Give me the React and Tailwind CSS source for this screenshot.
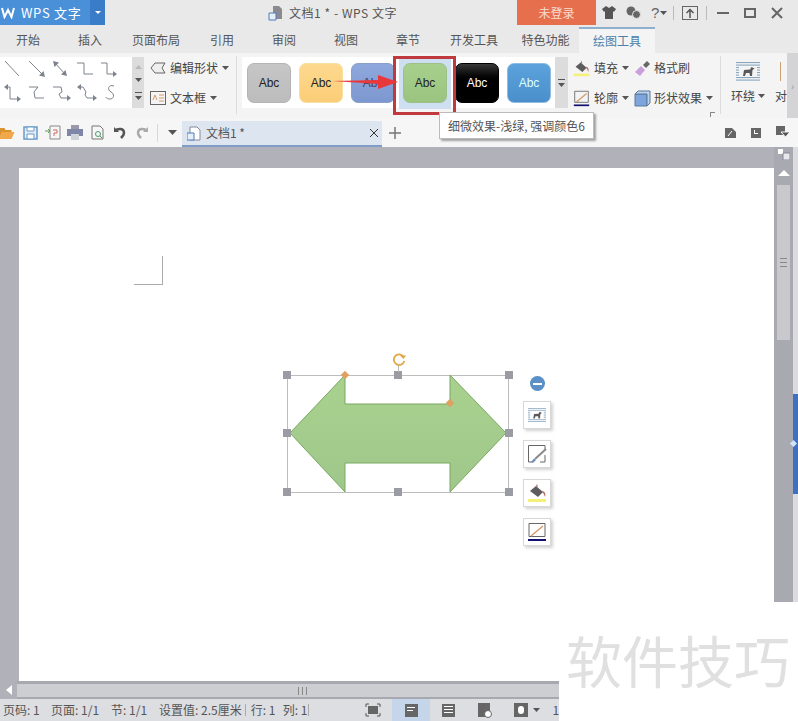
import React from "react";

const FONT = '"Noto Sans CJK SC", "Liberation Sans", sans-serif';

const Caret = ({ className = "" }) => (
  <svg width="7" height="4" viewBox="0 0 7 4" className={className}><path d="M0 0h7L3.500 4z" fill="#555" /></svg>
);

const tabs = [
  ["开始", "w-[56px]"], ["插入", "w-[68px]"], ["页面布局", "w-[64px]"], ["引用", "w-[68px]"], ["审阅", "w-[56px]"],
  ["视图", "w-[68px]"], ["章节", "w-[56px]"], ["开发工具", "w-[76px]"], ["特色功能", "w-[67px]"],
];

const Ln = ({ d, a }) => (
  <svg width="24" height="24" viewBox="0 0 24 24" fill="none" stroke="#7d838c" strokeWidth="1" className="overflow-visible">
    <path d={d} />
    {a && <path d={a} fill="#7d838c" stroke="none" />}
  </svg>
);

const lines = [
  ["M2 2L16 17"],
  ["M1 2L15 16", "M17 18l-6-1.500 4.500-4.500z"],
  ["M3 4L13 15", "M1 2l6 1.500-4.500 4.500zM15 17l-6-1.500 4.500-4.500z"],
  ["M0 4h7v11h9"],
  ["M0 4h6v11h7", "M16 15l-4-3v6z"],
  ["M3 4h4v12h8", "M1 4l4-3v6zM18 16l-4-3v6z"],
  ["M1 4h9l-4 5 1 6h9"],
  ["M1 4h8l1 5-3 2 2 4h7", "M19 15l-4-3v6z"],
  ["M3 4h3l3 5-1 3 2 3h7", "M0 4l4-3v6zM20 15l-4-3v6z"],
  ["M13 3C7 1 6 7 10 9s3 7-1 7-4-2-4-2"],
];

const Swatch = ({ bg, border, color = "text-[#222]" }) => (
  <div className={`w-[44px] h-[40px] rounded-[7px] border-[1.5px] flex items-center justify-center text-[12px] ${bg} ${border} ${color}`} style={{ fontFamily: '"Liberation Sans", sans-serif' }}>Abc</div>
);

const WrapIcon = ({ size = 24 }) => (
  <svg width={size} height={size * 0.8} viewBox="0 0 24 19">
    <path d="M0 .5h24M0 3h24M0 15.500h24M0 18h24M0 5.500h3M21 5.500h3M0 8h3M21 8h3M0 10.500h3M21 10.500h3M0 13h3M21 13h3" stroke="#7f9fba" strokeWidth="1" />
    <path d="M7 14l1-6 6-.5 1.500-2.500 3 1.500-2 1.500-.5 6h-2l-.5-3H10l-1 3z" fill="#5a5a5c" />
  </svg>
);

const PenBox = () => (
  <svg width="20" height="20" viewBox="0 0 20 20" fill="none">
    <path d="M18 6V1.500H1.500V18H6M18 11v7h-5" stroke="#666" strokeWidth="1" />
    <path d="M19 5L8 15" stroke="#8a8a8a" strokeWidth="2" />
    <path d="M4 18l3-3.500 2 1.500-2.500 2.500z" fill="#6b8cc0" />
  </svg>
);

const Bucket = ({ w = 20 }) => (
  <svg width={w} height={w} viewBox="0 0 20 20">
    <path d="M3 8l6-5 7 6-5 5z" fill="#5d5d5f" />
    <path d="M9 3l1-2 1 3zM16 8c2 1 3 3 2 6-1-2-1-4-3-5z" fill="#b46a5a" />
    <path d="M1 16h18v3H1z" fill="#f4f07a" />
  </svg>
);

const Outline = ({ w = 20 }) => (
  <svg width={w} height={w} viewBox="0 0 20 20" fill="none">
    <path d="M2 1.500h16v13H2z" stroke="#666" />
    <path d="M4 14L16 4" stroke="#d39a6a" strokeWidth="1.500" />
    <path d="M1 17h18v2H1z" fill="#101070" />
  </svg>
);

const FloatBtn = ({ children }) => (
  <div className="w-[28px] h-[28px] bg-white border border-[#d8d8d8] shadow-[2px_2px_3px_rgba(0,0,0,0.18)] flex items-center justify-center">{children}</div>
);

const Handle = ({ className }) => <div className={`absolute w-[8px] h-[8px] bg-[#9b9ba3] ${className}`} />;

export default function App() {
  return (
    <div className="relative w-[798px] h-[721px] overflow-hidden flex flex-col bg-[#f4f4f4] text-[12px] text-[#444]" style={{ fontFamily: FONT }}>
      {/* Title bar */}
      <div className="h-[25px] flex bg-[#e9e9e9] shrink-0">
        <div className="w-[90px] bg-[#4a90d9] flex items-center gap-[6px] pl-[1px] text-white text-[13px]">
          <svg width="14" height="12" viewBox="0 0 14 12" fill="none" stroke="#fff" strokeWidth="2"><path d="M1 1l2.500 9L7 3l3.500 7L13 1" /></svg>
          <span className="whitespace-nowrap tracking-[0.7px]">WPS 文字</span>
        </div>
        <div className="w-[15px] bg-[#3a7cc8] flex items-center justify-center"><svg width="6" height="3" viewBox="0 0 6 3"><path d="M0 0h6L3 3z" fill="#fff" /></svg></div>
        <div className="w-[163px] shrink-0" />
        <div className="flex items-center gap-[5px] w-[249px] shrink-0">
          <svg width="16" height="16" viewBox="0 0 16 16"><path d="M5 1h6l3 3v10H5z" fill="#8a8a90" /><path d="M1 8h7v7H1z" fill="#e8eef6" stroke="#4a7cc0" /></svg>
          <span className="whitespace-nowrap text-[#555] tracking-[0.55px]">文档1 * - WPS 文字</span>
        </div>
        <div className="w-[79px] bg-[#e6704e] text-[#f8ddd0] flex items-center justify-center">未登录</div>
        <div className="flex-1 flex items-center pl-[6px] text-[#666]">
          <svg width="14" height="13" viewBox="0 0 14 13"><path d="M4 0L0 3l2 3 1-1v8h8V5l1 1 2-3-4-3-3 2z" fill="#555" /></svg>
          <svg width="15" height="13" viewBox="0 0 15 13" className="ml-[10px]"><circle cx="5" cy="5" r="4.500" fill="#666" /><circle cx="10.500" cy="8.500" r="4" fill="#666" stroke="#e9e9e9" /></svg>
          <span className="ml-[10px] text-[15px] leading-none" style={{ fontFamily: '"Liberation Sans", sans-serif' }}>?</span>
          <Caret className="ml-[1px]" />
          <div className="w-px h-[14px] bg-[#bbb] ml-[6px]" />
          <div className="ml-[8px] w-[16px] h-[14px] border border-[#666] flex items-center justify-center">
            <svg width="10" height="10" viewBox="0 0 10 10" fill="none" stroke="#555" strokeWidth="1.500"><path d="M5 10V2M1.500 5L5 1.500 8.500 5" /></svg>
          </div>
          <div className="w-px h-[14px] bg-[#bbb] ml-[8px]" />
          <div className="ml-[10px] w-[12px] h-[2px] bg-[#666]" />
          <div className="ml-[15px] w-[12px] h-[10px] border-2 border-[#666]" />
          <svg width="12" height="12" viewBox="0 0 12 12" className="ml-[15px]" stroke="#666" strokeWidth="2"><path d="M1 1l10 10M11 1L1 11" /></svg>
        </div>
      </div>

      {/* Tabs */}
      <div className="h-[28px] flex bg-[#e9e9e9] shrink-0">
        {tabs.map(([t, w]) => (
          <div key={t} className={`${w} flex items-center justify-center text-[#555] pt-[2px]`}>{t}</div>
        ))}
        <div className="w-[76px] mt-[2px] bg-[#f4f4f4] border-t-2 border-[#8fb0cc] flex items-center justify-center text-[#4d80a8]">绘图工具</div>
      </div>

      {/* Ribbon */}
      <div className="h-[65px] flex bg-[#f4f4f4] shrink-0 relative">
        <div className="w-[132px] h-[51px] mt-[4px] bg-white grid grid-cols-[repeat(5,24.5px)] auto-rows-[24px] pl-[3px] pt-[2px] shrink-0">
          {lines.map(([d, a], i) => <Ln key={i} d={d} a={a} />)}
        </div>
        <div className="w-[12px] h-[51px] mt-[4px] bg-[#dcdcdc] flex flex-col items-center justify-around shrink-0 py-[3px]">
          <svg width="7" height="4" viewBox="0 0 7 4"><path d="M0 4h7L3.500 0z" fill="#bbb" /></svg>
          <Caret />
          <svg width="7" height="8" viewBox="0 0 7 8"><path d="M0 0h7v1H0zM0 4h7L3.500 8z" fill="#555" /></svg>
        </div>
        <div className="w-[92px] shrink-0 pl-[6px] pt-[4px] flex flex-col gap-[8px]">
          <div className="h-[22px] flex items-center gap-[4px] whitespace-nowrap">
            <svg width="16" height="12" viewBox="0 0 16 12" fill="#eee" stroke="#666"><path d="M1 6l4-5h10l-3 5 3 5H5z" /></svg>
            编辑形状<Caret />
          </div>
          <div className="h-[22px] flex items-center gap-[4px] whitespace-nowrap">
            <svg width="16" height="14" viewBox="0 0 16 14" fill="none"><rect x=".5" y=".5" width="15" height="13" stroke="#666" /><path d="M3 9l2-5 2 5M9 4h5M9 7h5M9 10h5" stroke="#d39a6a" /></svg>
            文本框<Caret />
          </div>
        </div>
        <div className="w-px h-[58px] mt-[3px] bg-[#dcdcdc] shrink-0" />
        <div className="w-[5px] shrink-0" />
        <div className="w-[313px] h-[51px] mt-[4px] bg-white flex items-center gap-[8px] pl-[5px] shrink-0 relative">
          <Swatch bg="bg-gradient-to-b from-[#c6c6c6] to-[#bcbcbc]" border="border-[#b4b4b4]" />
          <Swatch bg="bg-gradient-to-b from-[#fdd98e] to-[#fbcd77]" border="border-[#f6e0a0]" />
          <Swatch bg="bg-gradient-to-b from-[#8fa8dc] to-[#7d97d0]" border="border-[#8aa0c8]" color="text-[#445]" />
          <div className="relative w-[44px] h-[40px]">
            <div className="absolute -inset-x-[4px] -inset-y-[6px] bg-[#cddff0]" />
            <div className="relative"><Swatch bg="bg-gradient-to-b from-[#a8d08d] to-[#9ac480]" border="border-[#9dc088]" /></div>
          </div>
          <Swatch bg="bg-gradient-to-b from-[#3a3a3a] via-black to-black" border="border-black" color="text-white" />
          <Swatch bg="bg-gradient-to-b from-[#5ba3dd] to-[#4a8fcb]" border="border-[#8fbce0]" color="text-[#dff]" />
        </div>
        <div className="w-[13px] h-[51px] mt-[4px] bg-[#dcdcdc] flex items-center justify-center shrink-0">
          <svg width="7" height="8" viewBox="0 0 7 8"><path d="M0 0h7v1H0zM0 4h7L3.500 8z" fill="#555" /></svg>
        </div>
        <div className="w-[152px] shrink-0 pl-[5px] pt-[4px] flex flex-col gap-[8px] relative">
          <div className="h-[22px] flex items-center whitespace-nowrap">
            <Bucket w={17} /><span className="ml-[4px]">填充</span><Caret className="ml-[4px]" />
            <svg width="17" height="17" viewBox="0 0 17 17" className="ml-[5px]"><path d="M1 12l6-6 4 4-5 6z" fill="#c9a0dc" /><path d="M9 5l4-4 3 3-4 4z" fill="#666" /></svg>
            <span className="ml-[3px]">格式刷</span>
          </div>
          <div className="h-[22px] flex items-center whitespace-nowrap">
            <Outline w={17} /><span className="ml-[4px]">轮廓</span><Caret className="ml-[4px]" />
            <svg width="17" height="17" viewBox="0 0 17 17" className="ml-[5px]"><path d="M1 4h12v12H1z" fill="#7fa6dc" stroke="#5a7a9a" /><path d="M1 4l3-3h12v12l-3 3V4z" fill="#bcd2ea" stroke="#5a7a9a" /></svg>
            <span className="ml-[3px]">形状效果</span><Caret className="ml-[4px]" />
          </div>
          <div className="absolute right-[5px] bottom-[1px] w-[5px] h-[5px] border-l border-t border-[#888]" />
        </div>
        <div className="w-px h-[58px] mt-[3px] bg-[#dcdcdc] shrink-0" />
        <div className="w-[54px] shrink-0 flex flex-col items-start pl-[10px] pt-[9px]">
          <div className="ml-[5px]"><WrapIcon /></div>
          <div className="mt-[6px] flex items-center gap-[3px] whitespace-nowrap">环绕<Caret /></div>
        </div>
        <div className="w-[12px] shrink-0 pt-[9px] flex flex-col">
          <div className="w-px h-[19px] bg-[#c9a070] ml-[5px]" />
          <div className="mt-[6px] whitespace-nowrap">对</div>
        </div>
        <div className="w-[11px] h-[65px] bg-[#d4d4d6] flex items-center justify-center text-[#999] text-[10px]">›</div>
      </div>

      {/* Quick access bar */}
      <div className="h-[29px] flex items-end bg-[#f6f6f6] shrink-0 relative">
        <div className="h-[29px] w-[184px] flex items-center shrink-0 -ml-[2px]">
          <svg width="17" height="13" viewBox="0 0 16 13"><path d="M0 2h6l1 2h6v2H4l-3 6H0z" fill="#d9932f" /><path d="M3 6h13l-3 7H1z" fill="#f0a84a" /></svg>
          <svg width="15" height="14" viewBox="0 0 15 14" className="ml-[8px]"><path d="M1 1h13v12H1z" fill="#e4edf6" stroke="#6a9ac8" strokeWidth="1.500" /><path d="M4 1h7v4H4zM4 8h7v5H4z" fill="#fff" stroke="#6a9ac8" /></svg>
          <svg width="16" height="15" viewBox="0 0 16 15" className="ml-[7px]" fill="none"><path d="M5 1h10v13H5z" stroke="#888" /><path d="M0 6h5M3 4l2 2-2 2" stroke="#5aa05a" /><path d="M8 5h4v3H9v3" stroke="#c66" /></svg>
          <svg width="16" height="15" viewBox="0 0 16 15" className="ml-[6px]"><path d="M4 0h8v4H4z" fill="#99a" /><path d="M0 4h16v7H0z" fill="#7f86a8" /><path d="M4 9h8v6H4z" fill="#d0d4da" /></svg>
          <svg width="15" height="15" viewBox="0 0 15 15" fill="none" className="ml-[7px]"><path d="M2 1h8l3 3v10H2z" stroke="#777" /><circle cx="8" cy="9" r="2.500" stroke="#4a9a6a" /><path d="M10 11l2 2" stroke="#4a9a6a" /></svg>
          <svg width="14" height="13" viewBox="0 0 14 13" fill="none" className="ml-[8px]"><path d="M1 1v5h5z" fill="#555" /><path d="M2 5c3-3 9-3 9 2 0 2-2 4-3 5" stroke="#555" strokeWidth="2.500" /></svg>
          <svg width="14" height="13" viewBox="0 0 14 13" fill="none" className="ml-[8px]"><path d="M13 1v5H8z" fill="#aaa" /><path d="M12 5C9 2 3 2 3 7c0 2 2 4 3 5" stroke="#aaa" strokeWidth="2.500" /></svg>
          <div className="w-px h-[18px] bg-[#d8d8d8] ml-[8px]" />
          <svg width="9" height="5" viewBox="0 0 9 5" className="ml-[10px]"><path d="M0 0h9L4.500 5z" fill="#555" /></svg>
        </div>
        <div className="w-[200px] h-[26px] bg-[#dde5f0] border-b-2 border-[#7f9dc6] flex items-center pl-[5px] pr-[4px] gap-[5px] shrink-0 text-[#555]">
          <svg width="14" height="15" viewBox="0 0 14 15"><path d="M3 1h7l3 3v10H3z" fill="#fff" stroke="#889" /><path d="M0 7h7v7H0z" fill="#e8eef6" stroke="#4a7cc0" /></svg>
          <span className="flex-1 whitespace-nowrap">文档1 *</span>
          <svg width="8" height="8" viewBox="0 0 8 8" stroke="#333"><path d="M0 0l8 8M8 0L0 8" /></svg>
        </div>
        <div className="h-[29px] flex items-center ml-[7px]">
          <svg width="12" height="12" viewBox="0 0 12 12" stroke="#777" strokeWidth="1.500"><path d="M6 0v12M0 6h12" /></svg>
        </div>
        <div className="flex-1" />
        <div className="h-[29px] flex items-center gap-[15px] pr-[8px]">
          <svg width="11" height="12" viewBox="0 0 11 12"><path d="M0 1h7l4 4v6H0z" fill="#666" /><path d="M3 9l4-5" stroke="#fff" /></svg>
          <div className="w-[10px] h-[10px] bg-[#666] flex items-start justify-center"><div className="w-[4px] h-[4px] border-l border-b border-white mt-[2px]" /></div>
          <svg width="14" height="13" viewBox="0 0 14 13"><path d="M0 0h9v9H0z" fill="#666" /><path d="M5 6h9l-4.500 5z" fill="#555" stroke="#f6f6f6" /></svg>
        </div>
      </div>

      {/* Document */}
      <div className="h-[534px] flex shrink-0 relative">
        <div className="w-[774px] bg-[#b0b1b9] pl-[19px] pt-[21px] shrink-0">
          <div className="w-[755px] h-[513px] bg-white relative">
            {/* crop mark */}
            <div className="absolute left-[115px] top-[88px] w-[29px] h-[29px] border-r border-b border-[#aaa]" />
            {/* selection */}
            <div className="absolute left-[268px] top-[207px] w-[222px] h-[118px] border border-[#bdbdbd]">
              <svg width="223" height="119" viewBox="0 0 223 119" className="absolute -left-px -top-px overflow-visible">
                <defs><linearGradient id="g" x1="0" y1="0" x2="0" y2="1"><stop offset="0" stopColor="#a9d18e" /><stop offset="1" stopColor="#9fc78a" /></linearGradient></defs>
                <path d="M3 58L58 0V29H163V0L219 58 163 117V88H58V117Z" fill="url(#g)" stroke="#7aa862" strokeWidth="1" />
              </svg>
              <Handle className="-left-[5px] -top-[5px]" />
              <Handle className="left-[106px] -top-[5px]" />
              <Handle className="-right-[5px] -top-[5px]" />
              <Handle className="-left-[5px] top-[53px]" />
              <Handle className="-right-[5px] top-[53px]" />
              <Handle className="-left-[5px] -bottom-[4px]" />
              <Handle className="left-[106px] -bottom-[4px]" />
              <Handle className="-right-[5px] -bottom-[4px]" />
              <div className="absolute left-[54px] -top-[4px] w-[6px] h-[6px] rotate-45 bg-[#e0a060]" />
              <div className="absolute left-[159px] top-[24px] w-[6px] h-[6px] rotate-45 bg-[#e0a060]" />
              <div className="absolute left-[110px] -top-[11px] w-px h-[7px] bg-[#bbb]" />
              <svg width="16" height="16" viewBox="0 0 18 18" fill="none" className="absolute left-[103px] -top-[24px]"><path d="M14 5a6 6 0 1 0 1 5" stroke="#e0a848" strokeWidth="2" /><path d="M10 4h7l-3 4z" fill="#e0a848" /></svg>
            </div>
            {/* floating tools */}
            <div className="absolute left-[504px] top-[208px] flex flex-col items-center gap-[11px]">
              <div className="w-[15px] h-[15px] rounded-full bg-[#5b8fc8] flex items-center justify-center -mb-[1px]"><div className="w-[9px] h-[2px] bg-white" /></div>
              <FloatBtn><WrapIcon size={18} /></FloatBtn>
              <FloatBtn><PenBox /></FloatBtn>
              <FloatBtn><Bucket /></FloatBtn>
              <FloatBtn><Outline /></FloatBtn>
            </div>
          </div>
        </div>
        <div className="w-[19px] bg-[#a9a9b1] flex flex-col items-center shrink-0 pt-[2px]">
          <svg width="12" height="11" viewBox="0 0 12 11"><path d="M0 0h5v5H0z" fill="#fff" /><path d="M5 4h7v7H5z" fill="#e8e8ec" stroke="#889" /></svg>
          <svg width="12" height="6" viewBox="0 0 12 6" className="mt-[10px]"><path d="M0 6h12L6 0z" fill="#fff" /></svg>
          <div className="w-[13px] h-[155px] mt-[9px] bg-[#c9c9cd] flex flex-col items-center justify-center gap-[3px]">
            <div className="w-[7px] h-px bg-[#888]" /><div className="w-[7px] h-px bg-[#888]" /><div className="w-[7px] h-px bg-[#888]" />
          </div>
        </div>
        <div className="flex-1 flex flex-col bg-[#dcdce0]">
          <div className="h-[247px]" />
          <div className="h-[100px] bg-[#3f70c2] relative">
            <div className="absolute top-[47px] -left-[2px] w-[5px] h-[5px] rotate-45 bg-[#cfe6f8]" />
          </div>
        </div>
      </div>

      {/* H scrollbar */}
      <div className="h-[18px] flex shrink-0 bg-[#cdced2] border-t-[3px] border-b-[2px] border-[#a8a8b0]">
        <div className="w-[17px] -mt-[3px] -mb-[2px] bg-[#b0b1b9] flex items-center justify-center">
          <svg width="6" height="10" viewBox="0 0 6 10"><path d="M6 0v10L0 5z" fill="#fff" /></svg>
        </div>
        <div className="w-[281px]" />
        <div className="flex items-center gap-[3px]">
          <div className="w-px h-[8px] bg-[#888]" /><div className="w-px h-[8px] bg-[#888]" /><div className="w-px h-[8px] bg-[#888]" />
        </div>
      </div>

      {/* Status bar */}
      <div className="flex-1 flex items-center bg-[#dddee2] text-[#555] whitespace-nowrap pl-[3px]">
        <span className="w-[48px]">页码: 1</span>
        <span className="w-[60px]">页面: 1/1</span>
        <span className="w-[48px]">节: 1/1</span>
        <span>设置值: 2.5厘米</span>
        <span className="w-px h-[12px] bg-[#aaa] ml-[3px] mr-[5px]" />
        <span className="w-[32px]">行: 1</span>
        <span>列: 1</span>
        <span className="w-px h-[12px] bg-[#aaa] ml-[1px]" />
        <div className="w-[56px]" />
        <svg width="16" height="14" viewBox="0 0 16 14"><path d="M1 4V1h3M12 1h3v3M15 10v3h-3M4 13H1v-3" stroke="#555" fill="none" /><path d="M3 3h10v8H3z" fill="#666" /></svg>
        <div className="w-[38px] h-[22px] ml-[11px] bg-[#c6d6ea] flex items-center justify-center">
          <div className="w-[13px] h-[13px] bg-[#666] flex flex-col gap-[2px] pt-[3px] pl-[2px]"><div className="w-[8px] h-px bg-white" /><div className="w-[6px] h-px bg-white" /></div>
        </div>
        <div className="w-[13px] h-[13px] ml-[12px] bg-[#666] flex flex-col gap-[2px] pt-[2px] px-[2px]"><div className="h-px bg-white" /><div className="h-px bg-white" /><div className="h-px bg-white" /></div>
        <div className="w-[12px] h-[14px] ml-[23px] bg-[#666] relative"><div className="absolute -right-[2px] -bottom-[1px] w-[8px] h-[8px] rounded-full bg-white border border-[#666]" /></div>
        <div className="w-[14px] h-[14px] ml-[24px] bg-[#666] flex items-center justify-center"><div className="w-[6px] h-[8px] rounded-full bg-white" /></div>
        <Caret className="ml-[5px]" />
        <span className="ml-[12px]">1</span>
      </div>

      {/* Overlays: annotation + tooltip + watermark */}
      <div className="absolute left-[393px] top-[56px] w-[63px] h-[59px] border-[3px] border-[#c0393f] pointer-events-none" />
      <svg width="70" height="16" viewBox="0 0 70 16" className="absolute left-[332px] top-[74px]">
        <path d="M0 7L46 6V1L66 8 46 15V10Z" fill="#e8383c" />
      </svg>
      <div className="absolute left-[439px] top-[112px] h-[27px] px-[8px] flex items-center bg-white border border-[#bbb] shadow-[2px_2px_2px_rgba(0,0,0,0.35)] text-[#555] whitespace-nowrap">细微效果-浅绿, 强调颜色6</div>
      <div className="absolute left-[559px] top-[602px] w-[239px] h-[119px] bg-white flex items-start pl-[7px] pt-[23px] text-[56px] leading-[1.2] text-[#e0e0e0] whitespace-nowrap">软件技巧</div>
    </div>
  );
}
